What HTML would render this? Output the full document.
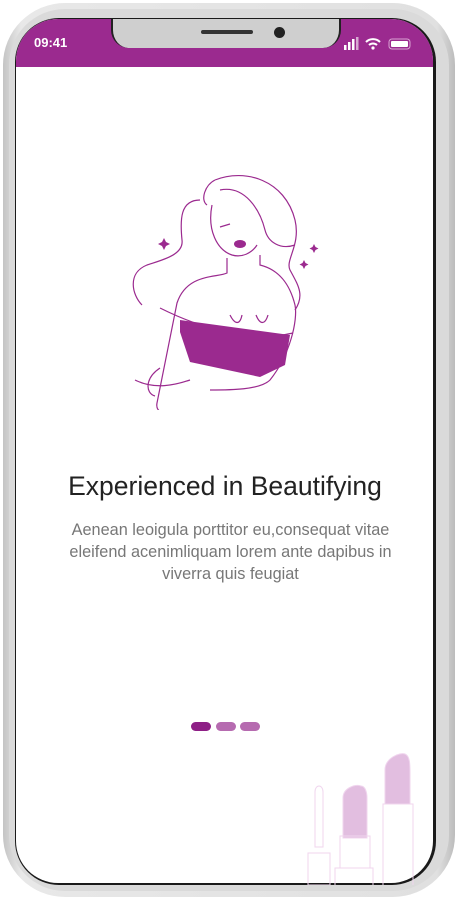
<!DOCTYPE html>
<html><head><style>
body{margin:0;width:460px;height:900px;background:#fff;position:relative;overflow:hidden;font-family:"Liberation Sans",sans-serif}
.frame{position:absolute;left:3px;top:3px;width:452px;height:894px;border-radius:62px;background:linear-gradient(90deg,#c4c4c4,#e8e8e8 4%,#e0e0e0 96%,#bcbcbc);}
.frame2{position:absolute;left:9px;top:9px;width:440px;height:882px;border-radius:56px;background:#dadada}
.screen{position:absolute;left:15px;top:18px;width:421px;height:867px;border-radius:44px;background:#1a1a1a;overflow:hidden}
.inner{position:absolute;left:1px;top:1px;width:417px;height:864px;border-radius:42px;background:#fff;overflow:hidden}
.bar{position:absolute;left:0;top:0;width:100%;height:48px;background:#9b2a8f}
.notch{position:absolute;left:95px;top:-2px;width:226px;height:31px;background:#cfcfcf;border-radius:0 0 18px 18px;border-left:2px solid #222;border-right:2px solid #222}
.spk{position:absolute;left:88px;top:13px;width:52px;height:4px;border-radius:2px;background:#333}
.cam{position:absolute;left:161px;top:10px;width:11px;height:11px;border-radius:50%;background:#222}
.time{position:absolute;left:18px;top:16px;color:#fff;font-weight:bold;font-size:13px}
h1{position:absolute;left:0;width:450px;top:471px;margin:0;text-align:center;font-weight:normal;font-size:26.5px;color:#222}
p{position:absolute;left:0;width:461px;top:519px;margin:0;text-align:center;font-size:16.3px;line-height:22px;color:#777}
.dot{position:absolute;top:722px;height:9px;border-radius:5px;width:20px}
</style></head><body>
<div class="frame"></div><div class="frame2"></div>
<div class="screen"><div class="inner">
<div class="bar"></div>
<div class="notch"><div class="spk"></div><div class="cam"></div></div>
<div class="time">09:41</div>
<svg style="position:absolute;left:328px;top:18px" width="76" height="14">
<rect x="0" y="8" width="2.5" height="5" fill="#fff"/><rect x="4" y="5" width="2.5" height="8" fill="#fff"/><rect x="8" y="2" width="2.5" height="11" fill="#fff"/><rect x="12" y="0" width="2.5" height="13" fill="#fff" opacity=".6"/>
<path d="M22 5a10 10 0 0 1 14 0M25 8a6 6 0 0 1 8 0" stroke="#fff" stroke-width="2" fill="none"/><circle cx="29" cy="11" r="1.6" fill="#fff"/>
<rect x="45" y="2" width="21" height="10" rx="3" fill="none" stroke="#d9a3d3" stroke-width="1"/><rect x="47" y="4" width="17" height="6" rx="1" fill="#fff"/>
</svg>
</div></div>
<svg style="position:absolute;left:120px;top:160px" width="220" height="250" fill="none" stroke="#9b2a8f" stroke-width="1.2">
<path d="M95 20c30-12 70 0 80 40 6 25 -10 40 -5 50 8 15 15 25 5 40"/>
<path d="M95 20c-10 5 -15 20 -8 25M92 45c-5 25 5 45 20 50 10 3 20-2 25-10"/>
<path d="M100 30c25 -5 40 20 45 40 3 12 15 20 30 15"/>
<path d="M80 40c-20 0 -20 20 -18 40 2 15 -20 20 -35 25 -20 8 -15 30 -5 40"/>
<path d="M107 98v15c-10 5 -40 0 -50 30l-20 100c-2 10 10 12 15 10"/>
<path d="M140 95v10c20 5 30 20 35 40 3 15 -5 50 -25 75 -10 10 -40 10 -60 10"/>
<path d="M40 148c40 20 90 35 133 25"/>
<path d="M15 220c20 10 40 5 55 0M40 208c-15 10 -15 25 -5 28"/>
<path d="M110 155c5 10 10 10 12 0M148 155c-3 10 -8 10 -12 0"/>
<path d="M100 67l10 -3"/>
<path fill="#9b2a8f" stroke="none" d="M60 160l110 15 -5 30 -25 12 -70 -15 -10 -30z"/>
<ellipse cx="120" cy="84" rx="6" ry="4" fill="#9b2a8f" stroke="none"/>
<path fill="#9b2a8f" stroke="none" d="M44 78l2 4 4 2 -4 2 -2 4 -2 -4 -4 -2 4 -2zM194 84l1.5 3 3 1.5 -3 1.5 -1.5 3 -1.5 -3 -3 -1.5 3 -1.5zM184 100l1.5 3 3 1.5 -3 1.5 -1.5 3 -1.5 -3 -3 -1.5 3 -1.5z"/>
</svg>
<h1>Experienced in Beautifying</h1>
<p>Aenean leoigula porttitor eu,consequat vitae<br>eleifend acenimliquam lorem ante dapibus in<br>viverra quis feugiat</p>
<div class="dot" style="left:191px;background:#8e1f86"></div>
<div class="dot" style="left:216px;background:#b66bb0"></div>
<div class="dot" style="left:240px;background:#b66bb0"></div>
<svg style="position:absolute;left:305px;top:740px" width="112" height="145" fill="none" stroke="#f0d5ee" stroke-width="1">
<path d="M10 52c0-8 8-8 8 0v55h-8z"/><rect x="3" y="113" width="22" height="32"/>
<path d="M38 70v-12c0-10 12-14 18-12 4 0 6 6 6 12v40h-24z" fill="#e2bee0"/>
<rect x="35" y="96" width="30" height="32"/><rect x="30" y="128" width="38" height="20"/>
<path d="M80 50v-20c0-12 15-18 20-16 5 2 5 10 5 20v30h-25z" fill="#e2bee0"/>
<rect x="78" y="64" width="30" height="90"/>
</svg>
</body></html>
